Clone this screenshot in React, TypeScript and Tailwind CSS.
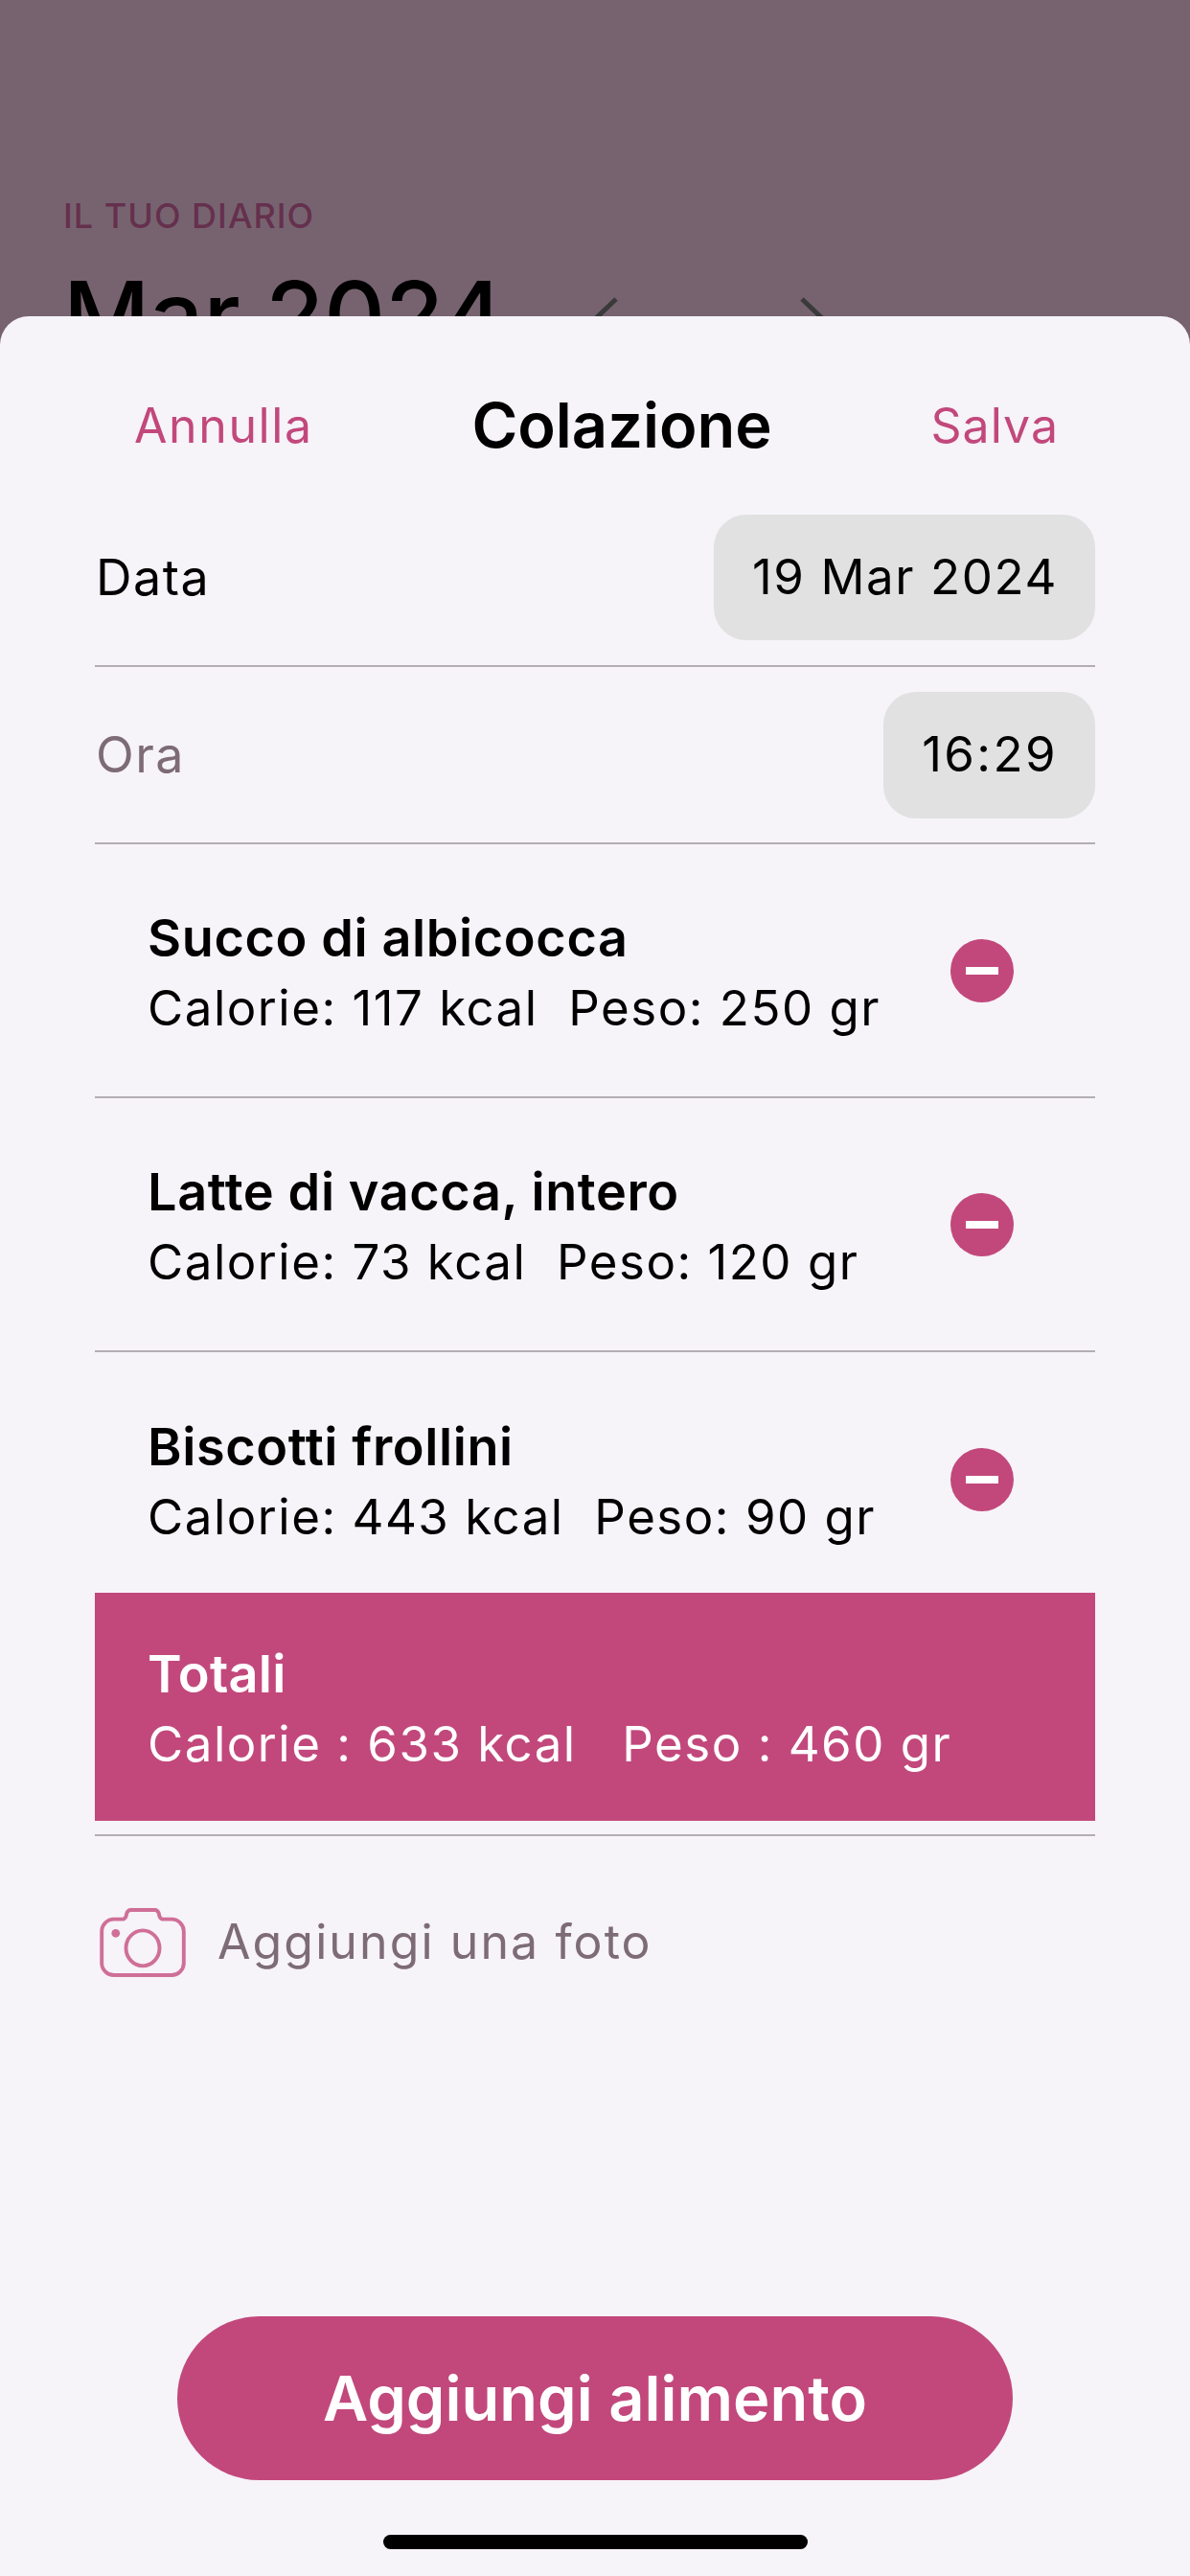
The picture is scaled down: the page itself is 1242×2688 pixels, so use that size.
const MinusBadge = () => (
  <div className="w-[66px] h-[66px] rounded-full bg-[#c2487c] flex items-center justify-center">
    <div className="w-[34px] h-[8px] bg-white" />
  </div>
);

const CameraIcon = () => (
  <svg width="90" height="72" viewBox="0 0 92 74" fill="none" stroke="#cf6f98" strokeWidth="4" className="blur-[0.5px]">
    <path d="M15 12H24C26 12 27 11 28 9L29 5C30 3 31 2 33 2H59C61 2 62 3 63 5L64 9C65 11 66 12 68 12H77C84 12 90 18 90 25V59C90 66 84 72 77 72H15C8 72 2 66 2 59V25C2 18 8 12 15 12Z" />
    <ellipse cx="46" cy="43" rx="18" ry="19" />
    <circle cx="17" cy="27" r="4.5" fill="#cf6f98" stroke="none" />
  </svg>
);

const foods = [
  { name: "Succo di albicocca", cal: "117", peso: "250" },
  { name: "Latte di vacca, intero", cal: "73", peso: "120" },
  { name: "Biscotti frollini", cal: "443", peso: "90" },
];

export default function App() {
  return (
    <div className="w-[1242px] h-[2688px] bg-[#776370] font-['Inter','Noto_Sans',sans-serif] flex flex-col overflow-hidden">
      {/* Background page, covered by the sheet */}
      <div className="h-[330px] shrink-0 overflow-hidden pl-[66px] pt-[207px]">
        <div className="text-[36px] leading-[36px] font-medium text-[#65304d] tracking-[1px]">IL TUO DIARIO</div>
        <div className="flex items-center mt-[32px]">
          <span className="text-[99px] leading-[108px] font-medium text-black">Mar 2024</span>
          <span className="ml-[90px] mt-[8px] text-[#3a3a3a]">
            <svg width="30" height="50" viewBox="0 0 30 50" fill="none" stroke="currentColor" strokeWidth="5"><path d="M26 4L4 25L26 46" /></svg>
          </span>
          <span className="ml-[186px] mt-[8px] text-[#3a3a3a]">
            <svg width="30" height="50" viewBox="0 0 30 50" fill="none" stroke="currentColor" strokeWidth="5"><path d="M4 4L26 25L4 46" /></svg>
          </span>
        </div>
      </div>

      {/* Sheet */}
      <div className="flex-1 bg-[#f6f3f9] rounded-t-[30px] flex flex-col px-[99px]">
        <div className="h-[207px] flex items-center justify-between pt-[21px]">
          <span className="ml-[41px] text-[50px] text-[#c2487c] tracking-[1.6px]">Annulla</span>
          <span className="text-[65px] font-semibold text-black">Colazione</span>
          <span className="mr-[38px] text-[50px] text-[#c2487c] tracking-[1px]">Salva</span>
        </div>

        <div className="h-[159px] pb-[26px] flex items-center justify-between border-b-2 border-[#b3aeb6]">
          <span className="ml-[1px] text-[52px] text-black tracking-[1.5px]">Data</span>
          <span className="h-[131px] pl-[40px] pr-[39px] rounded-[34px] bg-[#e0e1e0] flex items-center text-[51px] text-black tracking-[1.6px]">19 Mar 2024</span>
        </div>
        <div className="h-[185px] py-[26px] flex items-center justify-between border-b-2 border-[#b3aeb6]">
          <span className="ml-[1px] text-[52px] text-[#7d6b77] tracking-[1.5px]">Ora</span>
          <span className="h-[132px] pl-[40px] pr-[39px] rounded-[34px] bg-[#e0e1e0] flex items-center text-[51px] text-black tracking-[2.4px]">16:29</span>
        </div>

        {foods.map((f, i) => (
          <div
            key={f.name}
            className={`h-[265px] pl-[55px] pr-[85px] flex items-center justify-between ${i < 2 ? "border-b-2 border-[#b3aeb6]" : ""}`}
          >
            <div className="pt-[6px]">
              <div className="text-[54px] leading-[72px] font-semibold text-black tracking-[0.6px]">{f.name}</div>
              <div className="text-[51px] leading-[74px] text-black tracking-[1.5px] whitespace-pre">{`Calorie: ${f.cal} kcal  Peso: ${f.peso} gr`}</div>
            </div>
            <MinusBadge />
          </div>
        ))}

        <div className="h-[238px] -mt-[14px] shrink-0 bg-[#c2487c] pl-[55px] pt-[6px] text-white flex flex-col justify-center">
          <div className="text-[54px] leading-[72px] font-semibold tracking-[0.3px]">Totali</div>
          <div className="text-[51px] leading-[74px] tracking-[1.5px] whitespace-pre">{"Calorie : 633 kcal   Peso : 460 gr"}</div>
        </div>
        <div className="h-[2px] mt-[14px] bg-[#b3aeb6]" />

        <div className="mt-[73px] flex items-center">
          <span className="ml-[5px]"><CameraIcon /></span>
          <span className="ml-[33px] text-[50px] text-[#7d6b77] tracking-[2.1px]">Aggiungi una foto</span>
        </div>

        <div className="mt-auto flex flex-col items-center">
          <button className="w-[872px] h-[171px] rounded-full bg-[#c2487c] text-white text-[65px] font-semibold">
            Aggiungi alimento
          </button>
          <div className="mt-[57px] mb-[28px] w-[443px] h-[15px] rounded-full bg-black" />
        </div>
      </div>
    </div>
  );
}
